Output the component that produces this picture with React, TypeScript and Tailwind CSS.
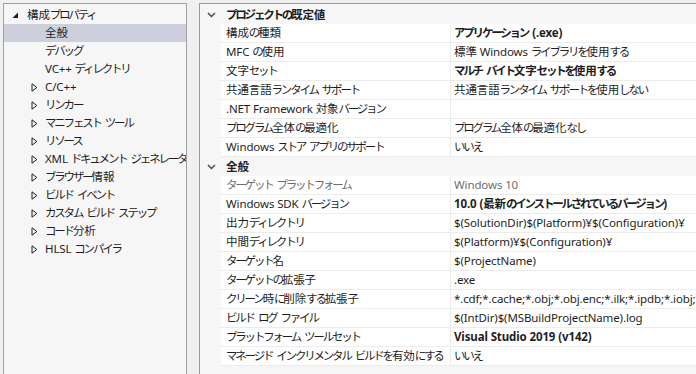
import React from "react";

type TreeItem = { label: string; level: 0 | 1; exp?: "open" | "closed"; selected?: boolean };

const tree: TreeItem[] = [
  { label: "構成プロパティ", level: 0, exp: "open" },
  { label: "全般", level: 1, selected: true },
  { label: "デバッグ", level: 1 },
  { label: "VC++ ディレクトリ", level: 1 },
  { label: "C/C++", level: 1, exp: "closed" },
  { label: "リンカー", level: 1, exp: "closed" },
  { label: "マニフェスト ツール", level: 1, exp: "closed" },
  { label: "リソース", level: 1, exp: "closed" },
  { label: "XML ドキュメント ジェネレーター", level: 1, exp: "closed" },
  { label: "ブラウザー情報", level: 1, exp: "closed" },
  { label: "ビルド イベント", level: 1, exp: "closed" },
  { label: "カスタム ビルド ステップ", level: 1, exp: "closed" },
  { label: "コード分析", level: 1, exp: "closed" },
  { label: "HLSL コンパイラ", level: 1, exp: "closed" },
];

type Row = { name: string; value: string; bold?: boolean; gray?: boolean };
type Section = { title: string; rows: Row[] };

const sections: Section[] = [
  {
    title: "プロジェクトの既定値",
    rows: [
      { name: "構成の種類", value: "アプリケーション (.exe)", bold: true },
      { name: "MFC の使用", value: "標準 Windows ライブラリを使用する" },
      { name: "文字セット", value: "マルチ バイト文字セットを使用する", bold: true },
      { name: "共通言語ランタイム サポート", value: "共通言語ランタイム サポートを使用しない" },
      { name: ".NET Framework 対象バージョン", value: "" },
      { name: "プログラム全体の最適化", value: "プログラム全体の最適化なし" },
      { name: "Windows ストア アプリのサポート", value: "いいえ" },
    ],
  },
  {
    title: "全般",
    rows: [
      { name: "ターゲット プラットフォーム", value: "Windows 10", gray: true },
      { name: "Windows SDK バージョン", value: "10.0 (最新のインストールされているバージョン)", bold: true },
      { name: "出力ディレクトリ", value: "$(SolutionDir)$(Platform)¥$(Configuration)¥" },
      { name: "中間ディレクトリ", value: "$(Platform)¥$(Configuration)¥" },
      { name: "ターゲット名", value: "$(ProjectName)" },
      { name: "ターゲットの拡張子", value: ".exe" },
      { name: "クリーン時に削除する拡張子", value: "*.cdf;*.cache;*.obj;*.obj.enc;*.ilk;*.ipdb;*.iobj;*.resources;*.tlb;*.tli;*.tlh;*.tmp" },
      { name: "ビルド ログ ファイル", value: "$(IntDir)$(MSBuildProjectName).log" },
      { name: "プラットフォーム ツールセット", value: "Visual Studio 2019 (v142)", bold: true },
      { name: "マネージド インクリメンタル ビルドを有効にする", value: "いいえ" },
    ],
  },
];

const KANA = /^[\u3040-\u30ff]+$/;

// Kana in the reference font are narrower than in Noto Sans CJK; tighten kana runs.
function T({ text }: { text: string }) {
  const parts = text.split(/([\u3040-\u30ff]+| )/).filter((p) => p !== "");
  return (
    <span>
      {parts.map((p, i) => {
        if (KANA.test(p)) {
          return (
            <span key={i} className="tracking-[-2.2px]">
              {p}
            </span>
          );
        }
        if (p === " " && i > 0 && KANA.test(parts[i - 1])) {
          return (
            <span key={i} className="tracking-[1px]">
              {p}
            </span>
          );
        }
        return (
          <span key={i} className="tracking-[-0.12px]">
            {p}
          </span>
        );
      })}
    </span>
  );
}

function OpenTri() {
  return (
    <svg width="7" height="7" viewBox="0 0 7 7" className="mt-[1px]">
      <polygon points="6,0.5 6,6 0.5,6" fill="#1e1e1e" />
    </svg>
  );
}

function ClosedTri() {
  return (
    <svg width="7" height="9" viewBox="0 0 7 9" className="ml-[1px] mt-[1px]">
      <polygon points="1,0.8 5.8,4.5 1,8.2" fill="none" stroke="#1e1e1e" strokeWidth="1" />
    </svg>
  );
}

function Chevron() {
  return (
    <svg width="9" height="6" viewBox="0 0 9 6">
      <polyline points="1,1 4.5,4.5 8,1" fill="none" stroke="#444" strokeWidth="1.4" />
    </svg>
  );
}

export default function App() {
  return (
    <div
      className="w-[696px] h-[374px] overflow-hidden bg-[#f0f0f0] flex pt-[3px] pl-[3px] text-[11.5px] leading-none text-[#1e1e1e]"
      style={{ fontFamily: '"Noto Sans", "Noto Sans CJK JP", sans-serif' }}
    >
      <div className="w-[184px] h-[420px] shrink-0 border border-[#a0a0a0] bg-[#f6f6f6] pt-[2px] overflow-hidden">
        {tree.map((t) => (
          <div
            key={t.label}
            className={
              "h-[18px] flex items-center whitespace-nowrap " +
              (t.level === 0 ? "pl-[8px] " : "pl-[26px] ") +
              (t.selected ? "bg-[#cdd0dc]" : "")
            }
          >
            <div className="w-[15px] shrink-0 flex items-center">
              {t.exp === "open" ? <OpenTri /> : t.exp === "closed" ? <ClosedTri /> : null}
            </div>
            <T text={t.label} />
          </div>
        ))}
      </div>
      <div className="ml-[12px] flex-1 min-w-0 h-[420px] border-l border-t border-[#9a9a9a] bg-[#f6f6f6] pt-[1px] overflow-hidden">
        {sections.map((s) => (
          <div key={s.title}>
            <div className="h-[19px] flex items-center">
              <div className="w-[21px] shrink-0 flex justify-center pl-[1px]">
                <Chevron />
              </div>
              <span className="pl-[5px] font-bold">
                <T text={s.title} />
              </span>
            </div>
            {s.rows.map((r) => (
              <div key={r.name} className="ml-[21px] h-[19px] flex bg-white border-b border-[#ececec]">
                <div
                  className={
                    "w-[230px] shrink-0 border-r border-[#ececec] pl-[5px] flex items-center whitespace-nowrap overflow-hidden " +
                    (r.gray ? "text-[#6d6d6d]" : "")
                  }
                >
                  <T text={r.name} />
                </div>
                <div
                  className={
                    "pl-[3px] flex items-center whitespace-nowrap " +
                    (r.bold ? "font-bold " : "") +
                    (r.gray ? "text-[#6d6d6d]" : "")
                  }
                >
                  <T text={r.value} />
                </div>
              </div>
            ))}
          </div>
        ))}
      </div>
    </div>
  );
}
